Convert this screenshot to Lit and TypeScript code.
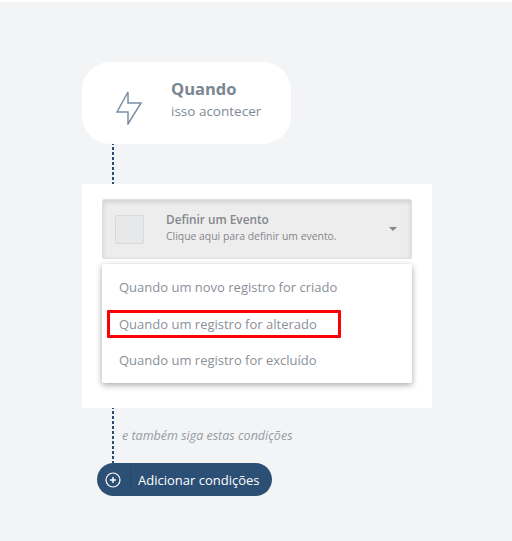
import { LitElement, html, css } from 'lit';
import { customElement } from 'lit/decorators.js';

/**
 * AppRoot LitElement
 * Workflow trigger picker with the event menu open
 */
@customElement('app-root')
export class AppRoot extends LitElement {
  static styles = css`
    :host {
      display: block;
      height: 541px;
      background: #ffffff;
      font-family: 'Open Sans', sans-serif;
      color: #808a95;
    }

    .page {
      box-sizing: border-box;
      height: 539px;
      margin-top: 2px;
      padding: 60px 0 0 82px;
      background: #f3f4f6;
    }

    .trigger {
      box-sizing: border-box;
      display: flex;
      align-items: center;
      width: 209px;
      height: 82px;
      padding-left: 33px;
      background: #ffffff;
      border-radius: 28px;
    }

    .trigger svg {
      flex: none;
      width: 28px;
      height: 34px;
      margin: 10px 28px 0 0;
    }

    .trigger__text {
      margin-bottom: 6px;
    }

    .trigger__title {
      font-size: 16.5px;
      font-weight: 700;
      line-height: 22px;
      color: #7a8792;
    }

    .trigger__sub {
      font-size: 13.5px;
      line-height: 22px;
    }

    .line {
      width: 2px;
      margin-left: 30px;
      background: linear-gradient(#2b4c71 3px, transparent 3px) 0 -2px / 2px 5px;
    }

    .line--top {
      height: 40px;
    }

    .panel {
      box-sizing: border-box;
      width: 350px;
      height: 224px;
      padding: 15px 20px 0;
      background: #ffffff;
      border-radius: 2px;
    }

    .select {
      box-sizing: border-box;
      display: flex;
      align-items: center;
      height: 60px;
      padding: 0 14px 0 12px;
      background: #ededed;
      border: 1px solid #e0e0e0;
      border-radius: 2px;
      box-shadow: inset 0 2px 5px rgba(0, 0, 0, 0.13);
    }

    .select__thumb {
      box-sizing: border-box;
      flex: none;
      width: 29px;
      height: 29px;
      margin-right: 22px;
      background: #e7e8ea;
      border: 1px solid #d9d9d9;
      border-radius: 2px;
    }

    .select__text {
      flex: 1;
      margin-bottom: 3px;
    }

    .select__title {
      font-size: 11.8px;
      font-weight: 600;
      line-height: 17px;
      color: #85878b;
    }

    .select__sub {
      font-size: 10.4px;
      line-height: 16px;
      color: #85878b;
    }

    .select__caret {
      width: 0;
      height: 0;
      border-left: 4px solid transparent;
      border-right: 4px solid transparent;
      border-top: 4px solid #85878b;
    }

    .menu {
      box-sizing: border-box;
      height: 119px;
      margin-top: 5px;
      padding-top: 5px;
      background: #ffffff;
      border-radius: 2px;
      box-shadow: 0 2px 6px rgba(0, 0, 0, 0.35);
    }

    .menu__item {
      position: relative;
      height: 36.5px;
      padding-left: 17px;
      font-size: 13px;
      line-height: 36px;
      color: #8a9099;
    }

    .menu__mark {
      position: absolute;
      top: 4px;
      left: 5px;
      box-sizing: border-box;
      width: 234px;
      height: 28px;
      border: 3px solid #fb0007;
      border-radius: 1px;
    }

    .line--bottom {
      height: 55px;
    }

    .conditions {
      display: flex;
      height: 0;
    }

    .conditions span {
      margin: -36px 0 0 40px;
      font-size: 12.5px;
      font-style: italic;
      line-height: 18px;
      white-space: nowrap;
      color: #969ba2;
    }

    .add {
      box-sizing: border-box;
      display: flex;
      align-items: center;
      width: 175px;
      height: 33px;
      margin-left: 15px;
      background: #2b4f75;
      border-radius: 17px;
      font-size: 13px;
      color: #ffffff;
    }

    .add svg {
      flex: none;
      width: 16px;
      height: 16px;
      margin: 0 9px 0 8px;
    }

    .add__divider {
      flex: none;
      width: 1px;
      height: 25px;
      margin-right: 7px;
      background: #27466a;
    }
  `;

  render() {
    return html`
      <div class="page">
        <div class="trigger">
          <svg viewBox="0 0 28 34" fill="none" stroke="#7b8ea3" stroke-width="1.5" stroke-linejoin="miter">
            <path d="M13 1 L2 21 H13 V33 L26 12 H13 Z" />
          </svg>
          <div class="trigger__text">
            <div class="trigger__title">Quando</div>
            <div class="trigger__sub">isso acontecer</div>
          </div>
        </div>
        <div class="line line--top"></div>
        <div class="panel">
          <div class="select">
            <div class="select__thumb"></div>
            <div class="select__text">
              <div class="select__title">Definir um Evento</div>
              <div class="select__sub">Clique aqui para definir um evento.</div>
            </div>
            <div class="select__caret"></div>
          </div>
          <div class="menu">
            <div class="menu__item">Quando um novo registro for criado</div>
            <div class="menu__item">
              Quando um registro for alterado
              <div class="menu__mark"></div>
            </div>
            <div class="menu__item">Quando um registro for excluído</div>
          </div>
        </div>
        <div class="line line--bottom"></div>
        <div class="conditions"><span>e também siga estas condições</span></div>
        <div class="add">
          <svg viewBox="0 0 16 16" fill="none" stroke="#ffffff">
            <circle cx="8" cy="8" r="7" stroke-width="1.2" />
            <path d="M8 5 V11 M5 8 H11" stroke-width="1.4" />
          </svg>
          <div class="add__divider"></div>
          <span>Adicionar condições</span>
        </div>
      </div>
    `;
  }
}
